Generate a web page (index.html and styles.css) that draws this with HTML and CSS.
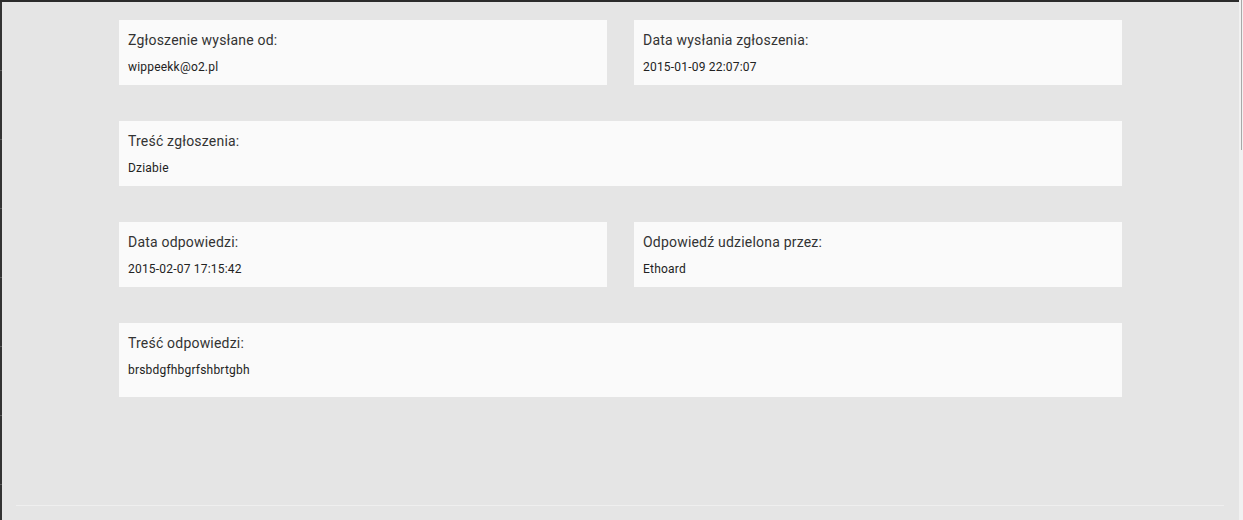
FILE: index.html
```html
<!DOCTYPE html>
<html lang="pl">
<head>
<meta charset="utf-8">
<title>Zgłoszenie</title>
<link rel="stylesheet" href="styles.css">
</head>
<body>
<div class="window">
  <div class="page">
    <div class="topbar"></div>
    <div class="body">
      <div class="leftstrip"></div>
      <main class="content">
        <div class="cards">
          <section class="card">
            <div class="label">Zgłoszenie wysłane od:</div>
            <div class="value">wippeekk@o2.pl</div>
          </section>
          <section class="card">
            <div class="label">Data wysłania zgłoszenia:</div>
            <div class="value">2015-01-09 22:07:07</div>
          </section>
          <section class="card card--wide">
            <div class="label">Treść zgłoszenia:</div>
            <div class="value">Dziabie</div>
          </section>
          <section class="card">
            <div class="label">Data odpowiedzi:</div>
            <div class="value">2015-02-07 17:15:42</div>
          </section>
          <section class="card">
            <div class="label">Odpowiedź udzielona przez:</div>
            <div class="value">Ethoard</div>
          </section>
          <section class="card card--wide card--tall">
            <div class="label">Treść odpowiedzi:</div>
            <div class="value">brsbdgfhbgrfshbrtgbh</div>
          </section>
        </div>
        <div class="footer-line"></div>
      </main>
    </div>
  </div>
  <div class="scrollbar"><div class="thumb"></div></div>
</div>
</body>
</html>
```

FILE: styles.css
```css
html, body {
  margin: 0;
  padding: 0;
  height: 100%;
}
body {
  background: #e5e5e5;
  font-family: Roboto, "Liberation Sans", Arial, sans-serif;
  overflow: hidden;
}
.window {
  display: flex;
  height: 520px;
}
.page {
  flex: 1;
  display: flex;
  flex-direction: column;
  min-width: 0;
}
.topbar {
  height: 2px;
  background: #2b2b2b;
}
.body {
  flex: 1;
  display: flex;
}
.leftstrip {
  width: 2px;
  background: repeating-linear-gradient(to bottom, #333 0, #333 68px, #5a5a5a 68px, #5a5a5a 69px);
}
.content {
  flex: 1;
  display: flex;
  flex-direction: column;
  padding: 18px 0 0;
}
.cards {
  display: grid;
  grid-template-columns: 1fr 1fr;
  column-gap: 27px;
  row-gap: 36px;
  padding: 0 117px;
}
.card {
  background: #fafafa;
  padding: 10px 9px 8px;
}
.card--wide {
  grid-column: span 2;
}
.card--tall {
  padding-bottom: 17px;
}
.label {
  font-size: 14px;
  line-height: 20px;
  letter-spacing: 0.2px;
  color: #333;
}
.value {
  margin-top: 7px;
  font-size: 12px;
  line-height: 20px;
  letter-spacing: 0.2px;
  color: #222;
}
.footer-line {
  margin: 108px 15px 0 14px;
  height: 1px;
  background: #efefef;
}
.scrollbar {
  width: 4px;
  background: #f1f1f1;
  padding-left: 2px;
  box-sizing: border-box;
}
.thumb {
  width: 1px;
  height: 150px;
  background: #a8a8a8;
}
```
